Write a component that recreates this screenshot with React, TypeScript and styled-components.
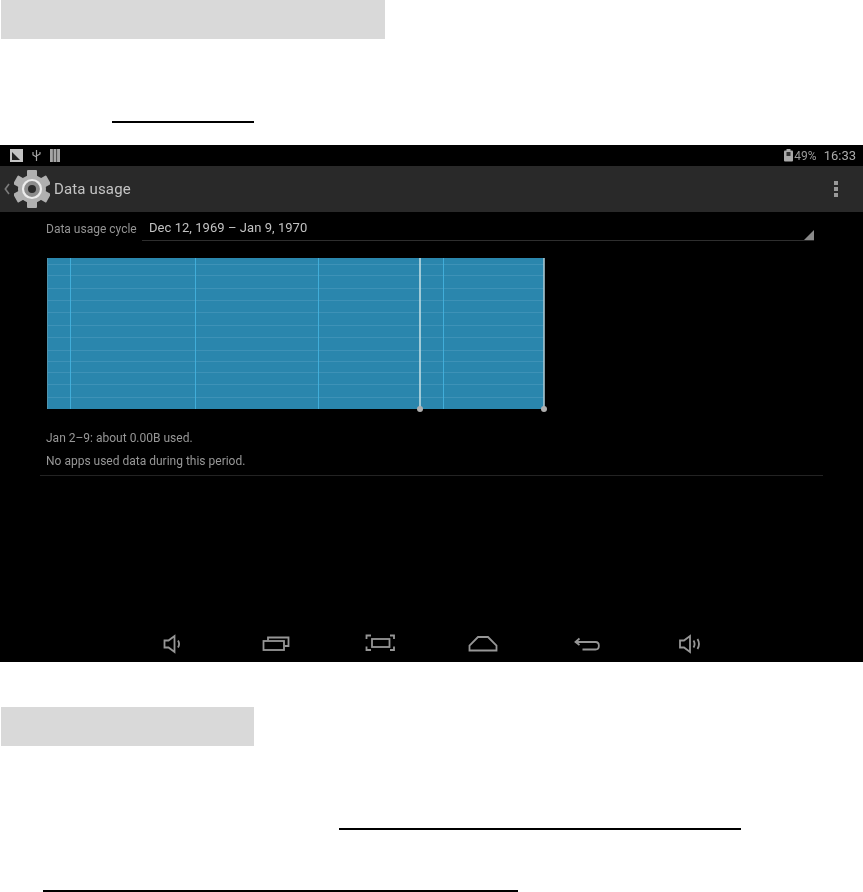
import { FunctionComponent } from 'react'
import styled, { createGlobalStyle } from 'styled-components'

const GlobalStyle = createGlobalStyle`
  html, body {
    margin: 0;
    background: #fff;
    font-family: Roboto, "Noto Sans", sans-serif;
  }
`

const hLines = [264, 275, 288, 300, 312, 325, 337, 350, 361, 372, 384, 397]
const vLines = [70, 195, 318, 443]
const gearAngles = [0, 60, 120, 180, 240, 300]

const Gear: FunctionComponent = () => (
  <GearIcon width="36" height="40" viewBox="0 0 36 40">
    {gearAngles.map((a) => (
      <rect key={a} x="13" y="1" width="10" height="12" rx="1" fill="#b0b0b0" transform={`rotate(${a} 18 20)`} />
    ))}
    <circle cx="18" cy="20" r="14" fill="#b0b0b0" />
    <circle cx="18" cy="20" r="9" fill="#8c8c8c" stroke="#ececec" strokeWidth="2.2" />
    <circle cx="18" cy="20" r="4" fill="#2a2a2a" />
  </GearIcon>
)

const NavIcon: FunctionComponent<{ name: string }> = ({ name }) => {
  return (
    <svg width="32" height="20" viewBox="0 0 32 20" fill="none" stroke="#969696" strokeWidth="1.8">
      {name === 'voldown' && (
        <>
          <path d="M7.5 6.5h4l6-4.5v16l-6-4.5h-4z" />
          <path d="M21 6.5q2.2 3.5 0 7" />
        </>
      )}
      {name === 'recents' && (
        <>
          <rect x="3.5" y="7" width="20.5" height="9" />
          <path d="M8 6.5V3.5h20.5V12H24.5" />
        </>
      )}
      {name === 'screenshot' && (
        <>
          <rect x="8" y="5" width="17.5" height="8" />
          <path d="M2.5 5V1.5H7M26 1.5h4V5M2.5 12.5V16H7M26 16h4v-3.5" />
        </>
      )}
      {name === 'home' && <path d="M2.5 16.5v-5L11 3h10l8.5 8.5v5z" />}
      {name === 'back' && (
        <>
          <path d="M4.5 8h20c4.5 0 4.5 7.5 0 7.5H11.5" />
          <path d="M8.5 4.5 4.5 8l4 3" />
        </>
      )}
      {name === 'volup' && (
        <>
          <path d="M6 6.5h4l6-4.5v16l-6-4.5H6z" />
          <path d="M19.5 6.5q2.2 3.5 0 7M23.5 5q3 5 0 10" />
        </>
      )}
    </svg>
  )
}

const navItems = ['voldown', 'recents', 'screenshot', 'home', 'back', 'volup']

export default function App() {
  return (
    <>
      <GlobalStyle />
      <Page>
        <Heading $width={384} />
        <Rule $left={112} $width={142} $top={82} />

        <Screen>
          <StatusBar>
            <StatusIcons>
              <svg width="13" height="13" viewBox="0 0 13 13">
                <rect width="13" height="13" fill="#c4c4c4" />
                <path d="M2 3l8 8H2z" fill="#222" />
              </svg>
              <svg width="9" height="13" viewBox="0 0 9 13" fill="none" stroke="#a5a5a5" strokeWidth="1.2">
                <path d="M4.5 1v11M1 3v3l3.5 2M8 3v2L4.5 7" />
              </svg>
              <svg width="10" height="13" viewBox="0 0 10 13">
                <rect width="10" height="13" fill="#a5a5a5" />
                <path d="M3.3 0v13M6.6 0v13" stroke="#333" strokeWidth="0.8" />
              </svg>
            </StatusIcons>
            <StatusRight>
              <svg width="9" height="13" viewBox="0 0 9 13">
                <rect x="2.5" width="4" height="2" fill="#aaa" />
                <rect y="1.5" width="9" height="11" rx="1" fill="#aaa" />
                <rect x="2.5" y="3" width="4" height="4" fill="#333" />
              </svg>
              <Percent>49%</Percent>
              <Clock>16:33</Clock>
            </StatusRight>
          </StatusBar>

          <ActionBar>
            <svg width="6" height="12" viewBox="0 0 6 12" fill="none" stroke="#7c7c7c" strokeWidth="1.6">
              <path d="M5 1 1.3 6 5 11" />
            </svg>
            <Gear />
            <Title>Data usage</Title>
            <Overflow>
              <Dot />
              <Dot />
              <Dot />
            </Overflow>
          </ActionBar>

          <Content>
            <CycleRow>
              <CycleLabel>Data usage cycle</CycleLabel>
              <Spinner>
                <SpinnerValue>Dec 12, 1969 – Jan 9, 1970</SpinnerValue>
                <svg width="10" height="10" viewBox="0 0 10 10">
                  <path d="M10 0v10H0z" fill="#8a8a8a" />
                </svg>
              </Spinner>
            </CycleRow>

            <ChartSvg width="504" height="156" viewBox="47 258 504 156">
              <rect x="47" y="258" width="497" height="151" fill="#2a86ad" />
              {hLines.map((y) => (
                <line key={y} x1="47" x2="544" y1={y + 0.5} y2={y + 0.5} stroke="#5aa5c6" strokeOpacity="0.42" />
              ))}
              {vLines.map((x) => (
                <line key={x} x1={x + 0.5} x2={x + 0.5} y1="258" y2="409" stroke="#45b4e0" strokeOpacity="0.85" />
              ))}
              <line x1="47.5" x2="47.5" y1="258" y2="409" stroke="#4f93ad" />
              <line x1="420" x2="420" y1="257" y2="409" stroke="#bfdce2" strokeWidth="1.6" />
              <line x1="544" x2="544" y1="257" y2="409" stroke="#a9c6d0" strokeWidth="1.6" />
              <circle cx="420" cy="409" r="3" fill="#b0b0b0" />
              <circle cx="544" cy="409" r="3" fill="#b0b0b0" />
            </ChartSvg>

            <Summary>Jan 2–9: about 0.00B used.</Summary>
            <Summary $gap={11}>No apps used data during this period.</Summary>
            <Divider />
          </Content>

          <NavBar>
            {navItems.map((n) => (
              <NavSlot key={n}>
                <NavIcon name={n} />
              </NavSlot>
            ))}
          </NavBar>
        </Screen>

        <Heading $width={253} $top={45} />
        <Rule $left={339} $width={402} $top={82} />
        <Rule $left={43} $width={475} $top={60} />
      </Page>
    </>
  )
}

const Page = styled.div`
  width: 863px;
  height: 892px;
  overflow: hidden;
  background: #fff;
`

const Heading = styled.div<{ $width: number; $top?: number }>`
  width: ${(p) => p.$width}px;
  height: 39px;
  margin-left: 1px;
  margin-top: ${(p) => p.$top || 0}px;
  background: #d9d9d9;
`

const Rule = styled.div<{ $left: number; $width: number; $top: number }>`
  width: ${(p) => p.$width}px;
  height: 2px;
  margin-left: ${(p) => p.$left}px;
  margin-top: ${(p) => p.$top}px;
  background: #000;
`

const Screen = styled.div`
  display: flex;
  flex-direction: column;
  height: 517px;
  margin-top: 22px;
  background: #000;
  color: #a8a8a8;
  filter: blur(0.35px);
`

const StatusBar = styled.div`
  display: flex;
  align-items: center;
  justify-content: space-between;
  height: 21px;
  padding: 0 7px 0 10px;
  flex: none;
`

const StatusIcons = styled.div`
  display: flex;
  align-items: center;
  gap: 9px;
`

const StatusRight = styled.div`
  display: flex;
  align-items: center;
`

const Percent = styled.span`
  margin-left: 1px;
  font-size: 12px;
  color: #9a9a9a;
`

const Clock = styled.span`
  margin-left: 7px;
  font-size: 13px;
  color: #ababab;
`

const ActionBar = styled.div`
  display: flex;
  align-items: center;
  height: 46px;
  padding-left: 4px;
  background: #292929;
  flex: none;
`

const GearIcon = styled.svg`
  margin-left: 4px;
`

const Title = styled.div`
  margin-left: 4px;
  font-size: 15px;
  letter-spacing: 0.15px;
  color: #c4c4c4;
`

const Overflow = styled.div`
  display: flex;
  flex-direction: column;
  gap: 2px;
  margin-left: auto;
  margin-right: 25px;
`

const Dot = styled.div`
  width: 4px;
  height: 4px;
  background: #9a9a9a;
`

const Content = styled.div`
  display: flex;
  flex-direction: column;
  flex: 1;
  padding: 0 40px;
`

const CycleRow = styled.div`
  display: flex;
  align-items: flex-end;
  height: 29px;
  padding: 0 9px 0 6px;
`

const CycleLabel = styled.div`
  width: 96px;
  padding-bottom: 5px;
  font-size: 12px;
  color: #939393;
`

const Spinner = styled.div`
  display: flex;
  flex: 1;
  align-items: flex-end;
  justify-content: space-between;
  height: 26px;
  padding: 0 0 0 7px;
  border-bottom: 1px solid #2e2e2e;
`

const SpinnerValue = styled.div`
  align-self: center;
  font-size: 13px;
  letter-spacing: 0.05px;
  color: #c2c2c2;
`

const ChartSvg = styled.svg`
  display: block;
  margin: 17px 0 0 7px;
`

const Summary = styled.div<{ $gap?: number }>`
  margin: ${(p) => p.$gap ?? 18}px 0 0 6px;
  font-size: 12px;
  line-height: 12px;
  color: #979797;
`

const Divider = styled.div`
  height: 1px;
  margin-top: 8px;
  background: #232323;
`

const NavBar = styled.div`
  display: flex;
  justify-content: center;
  flex: none;
  height: 36px;
`

const NavSlot = styled.div`
  display: flex;
  justify-content: center;
  width: 103.6px;
  padding-top: 8px;
`
